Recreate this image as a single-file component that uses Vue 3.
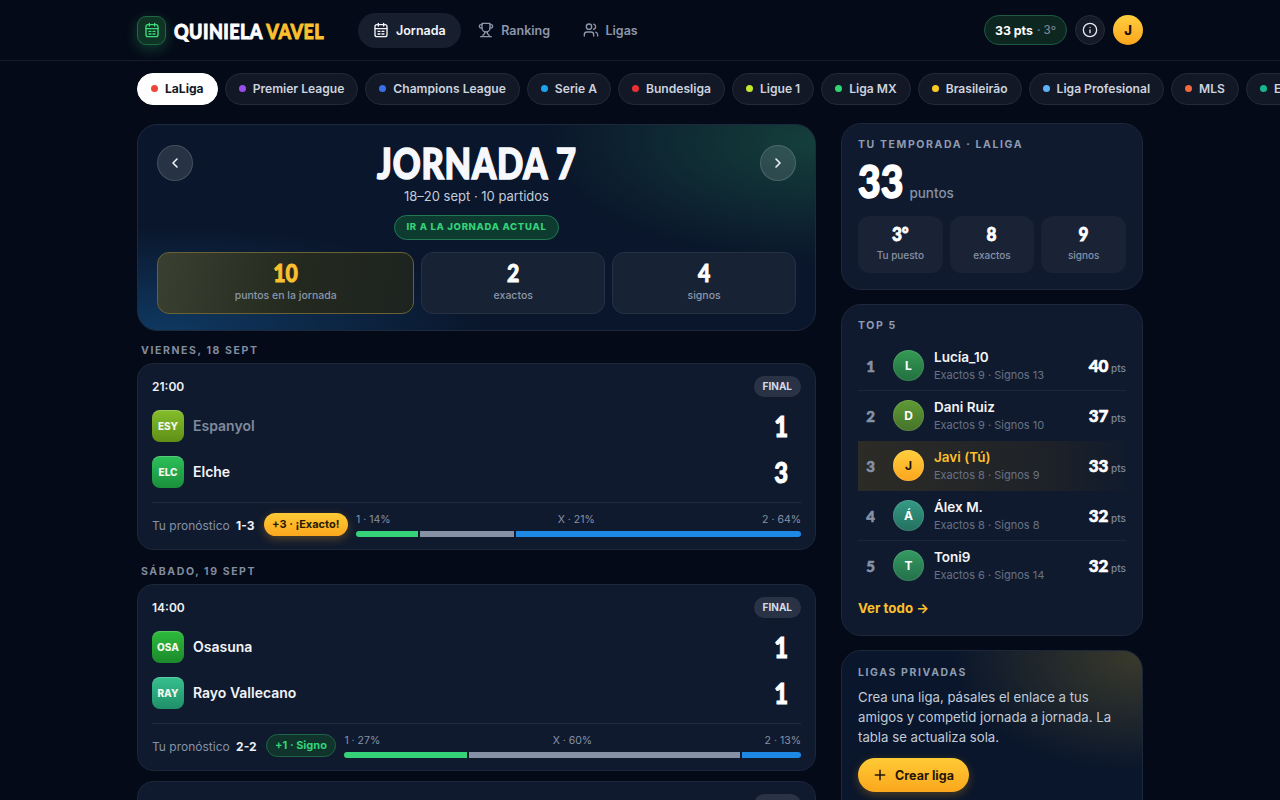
<template>
  <div class="page">
    <!-- cabecera -->
    <header class="topbar">
      <div class="topbar-in">
        <div class="logo">
          <span class="logo-icon">
            <svg width="16" height="16" viewBox="0 0 24 24" fill="none" stroke="#3ddc7c" stroke-width="2" stroke-linecap="round" stroke-linejoin="round">
              <rect x="3" y="4" width="18" height="18" rx="3" />
              <path d="M8 2v4M16 2v4M3 10h18M7.5 14h3M13.5 14h3M7.5 18h3M13.5 18h3" />
            </svg>
          </span>
          <span class="logo-text">QUINIELA <em>VAVEL</em></span>
        </div>
        <nav class="nav">
          <a class="nav-item active">
            <svg width="16" height="16" viewBox="0 0 24 24" fill="none" stroke="currentColor" stroke-width="2" stroke-linecap="round" stroke-linejoin="round">
              <rect x="3" y="4" width="18" height="18" rx="3" />
              <path d="M8 2v4M16 2v4M3 10h18M7.5 14h3M13.5 14h3M7.5 18h3M13.5 18h3" />
            </svg>
            Jornada
          </a>
          <a class="nav-item">
            <svg width="16" height="16" viewBox="0 0 24 24" fill="none" stroke="currentColor" stroke-width="2" stroke-linecap="round" stroke-linejoin="round">
              <path d="M6 9H4.5a2.5 2.5 0 0 1 0-5H6M18 9h1.5a2.5 2.5 0 0 0 0-5H18M4 22h16M10 14.66V17c0 .55-.47.98-.97 1.21C7.85 18.75 7 20.24 7 22M14 14.66V17c0 .55.47.98.97 1.21C16.15 18.75 17 20.24 17 22" />
              <path d="M18 2H6v7a6 6 0 0 0 12 0V2Z" />
            </svg>
            Ranking
          </a>
          <a class="nav-item">
            <svg width="16" height="16" viewBox="0 0 24 24" fill="none" stroke="currentColor" stroke-width="2" stroke-linecap="round" stroke-linejoin="round">
              <path d="M16 21v-2a4 4 0 0 0-4-4H6a4 4 0 0 0-4 4v2" />
              <circle cx="9" cy="7" r="4" />
              <path d="M22 21v-2a4 4 0 0 0-3-3.87M16 3.13a4 4 0 0 1 0 7.75" />
            </svg>
            Ligas
          </a>
        </nav>
        <div class="top-right">
          <div class="pts-pill">33 pts <span>· 3º</span></div>
          <button class="info-btn">
            <svg width="16" height="16" viewBox="0 0 24 24" fill="none" stroke="currentColor" stroke-width="2" stroke-linecap="round">
              <circle cx="12" cy="12" r="10" />
              <path d="M12 16v-4M12 8h.01" />
            </svg>
          </button>
          <div class="me">J</div>
        </div>
      </div>
    </header>

    <!-- competiciones -->
    <div class="chips">
      <button v-for="c in leagues" :key="c.name" class="chip" :class="{ on: c.on }">
        <i :style="{ background: c.color }"></i>{{ c.name }}
      </button>
    </div>

    <div class="layout">
      <main class="col-main">
        <section class="hero">
          <div class="hero-top">
            <button class="arrow">
              <svg width="16" height="16" viewBox="0 0 24 24" fill="none" stroke="currentColor" stroke-width="2.4" stroke-linecap="round" stroke-linejoin="round"><path d="m15 18-6-6 6-6" /></svg>
            </button>
            <div class="hero-title">
              <h1>JORNADA 7</h1>
              <p>18–20 sept · 10 partidos</p>
              <span class="go-now">IR A LA JORNADA ACTUAL</span>
            </div>
            <button class="arrow">
              <svg width="16" height="16" viewBox="0 0 24 24" fill="none" stroke="currentColor" stroke-width="2.4" stroke-linecap="round" stroke-linejoin="round"><path d="m9 18 6-6-6-6" /></svg>
            </button>
          </div>
          <div class="hero-stats">
            <div class="hstat gold"><b>10</b><span>puntos en la jornada</span></div>
            <div class="hstat"><b>2</b><span>exactos</span></div>
            <div class="hstat"><b>4</b><span>signos</span></div>
          </div>
        </section>

        <template v-for="day in days" :key="day.label">
          <h3 class="day">{{ day.label }}</h3>
          <article v-for="m in day.matches" :key="m.time + m.home.code" class="match">
            <div class="match-head">
              <span class="time">{{ m.time }}</span>
              <span class="final">FINAL</span>
            </div>
            <div class="team" :class="{ lost: m.home.lost }">
              <span class="crest" :style="{ background: m.home.bg }">{{ m.home.code }}</span>
              <span class="tname">{{ m.home.name }}</span>
              <span class="score">{{ m.home.goals }}</span>
            </div>
            <div class="team">
              <span class="crest" :style="{ background: m.away.bg }">{{ m.away.code }}</span>
              <span class="tname">{{ m.away.name }}</span>
              <span class="score">{{ m.away.goals }}</span>
            </div>
            <div class="match-foot">
              <span class="pred">Tu pronóstico <b>{{ m.pred }}</b></span>
              <span class="award" :class="m.kind">{{ m.award }}</span>
              <div class="odds">
                <div class="odds-labels">
                  <span>1 · {{ m.odds[0] }}%</span>
                  <span>X · {{ m.odds[1] }}%</span>
                  <span>2 · {{ m.odds[2] }}%</span>
                </div>
                <div class="bar">
                  <i class="g" :style="{ flexGrow: m.odds[0] }"></i>
                  <i class="s" :style="{ flexGrow: m.odds[1] }"></i>
                  <i class="b" :style="{ flexGrow: m.odds[2] }"></i>
                </div>
              </div>
            </div>
          </article>
        </template>
      </main>

      <aside class="col-side">
        <section class="card season">
          <h4>TU TEMPORADA · LALIGA</h4>
          <div class="big"><b>33</b><span>puntos</span></div>
          <div class="season-stats">
            <div><b>3º</b><span>Tu puesto</span></div>
            <div><b>8</b><span>exactos</span></div>
            <div><b>9</b><span>signos</span></div>
          </div>
        </section>

        <section class="card top">
          <h4>TOP 5</h4>
          <div v-for="r in ranking" :key="r.pos" class="rank" :class="{ mine: r.mine }">
            <span class="pos">{{ r.pos }}</span>
            <span class="ava" :style="{ background: r.bg }">{{ r.initial }}</span>
            <div class="who">
              <strong>{{ r.name }}</strong>
              <small>Exactos {{ r.ex }} · Signos {{ r.si }}</small>
            </div>
            <div class="rpts"><b>{{ r.pts }}</b> pts</div>
          </div>
          <a class="more">Ver todo →</a>
        </section>

        <section class="card priv">
          <h4>LIGAS PRIVADAS</h4>
          <p>Crea una liga, pásales el enlace a tus amigos y competid jornada a jornada. La tabla se actualiza sola.</p>
          <button class="create">
            <svg width="14" height="14" viewBox="0 0 24 24" fill="none" stroke="currentColor" stroke-width="2.6" stroke-linecap="round"><path d="M12 4v16M4 12h16" /></svg>
            Crear liga
          </button>
        </section>
      </aside>
    </div>
  </div>
</template>

<script setup>
const leagues = [
  { name: 'LaLiga', color: '#f04438', on: true },
  { name: 'Premier League', color: '#9b4dea' },
  { name: 'Champions League', color: '#3b6fe8' },
  { name: 'Serie A', color: '#1ba3f0' },
  { name: 'Bundesliga', color: '#ea2f36' },
  { name: 'Ligue 1', color: '#c4e82e' },
  { name: 'Liga MX', color: '#2fd672' },
  { name: 'Brasileirão', color: '#fbcb25' },
  { name: 'Liga Profesional', color: '#5cb2f6' },
  { name: 'MLS', color: '#f2693f' },
  { name: 'Eredivisie', color: '#14b88a' },
]

const days = [
  {
    label: 'VIERNES, 18 SEPT',
    matches: [
      {
        time: '21:00',
        home: { code: 'ESY', name: 'Espanyol', goals: 1, lost: true, bg: 'linear-gradient(180deg,#84bd2c,#5f8f16)' },
        away: { code: 'ELC', name: 'Elche', goals: 3, bg: 'linear-gradient(180deg,#2cc05a,#1a8f3c)' },
        pred: '1-3',
        award: '+3 · ¡Exacto!',
        kind: 'exact',
        odds: [14, 21, 64],
      },
    ],
  },
  {
    label: 'SÁBADO, 19 SEPT',
    matches: [
      {
        time: '14:00',
        home: { code: 'OSA', name: 'Osasuna', goals: 1, bg: 'linear-gradient(180deg,#2dbb3c,#1b8a2b)' },
        away: { code: 'RAY', name: 'Rayo Vallecano', goals: 1, bg: 'linear-gradient(180deg,#37c08f,#1f8f68)' },
        pred: '2-2',
        award: '+1 · Signo',
        kind: 'sign',
        odds: [27, 60, 13],
      },
      {
        time: '16:15',
        home: { code: 'VIL', name: 'Villarreal', goals: 2, bg: 'linear-gradient(180deg,#e8c52c,#b8951a)' },
        away: { code: 'GET', name: 'Getafe', goals: 0, bg: 'linear-gradient(180deg,#3a6fd8,#2450a8)' },
        pred: '1-0',
        award: '+1 · Signo',
        kind: 'sign',
        odds: [52, 28, 20],
      },
    ],
  },
]

const ranking = [
  { pos: 1, initial: 'L', name: 'Lucía_10', ex: 9, si: 13, pts: 40, bg: 'linear-gradient(180deg,#359a55,#22703f)' },
  { pos: 2, initial: 'D', name: 'Dani Ruiz', ex: 9, si: 10, pts: 37, bg: 'linear-gradient(180deg,#5f9a35,#45742a)' },
  { pos: 3, initial: 'J', name: 'Javi (Tú)', ex: 8, si: 9, pts: 33, mine: true, bg: 'linear-gradient(180deg,#ffcf3d,#fca51e)' },
  { pos: 4, initial: 'Á', name: 'Álex M.', ex: 8, si: 8, pts: 32, bg: 'linear-gradient(180deg,#359a85,#24705f)' },
  { pos: 5, initial: 'T', name: 'Toni9', ex: 6, si: 14, pts: 32, bg: 'linear-gradient(180deg,#359a62,#24704a)' },
]
</script>

<style>
html,
body {
  background: #050a18;
  overflow: hidden;
}
</style>

<style scoped>
* {
  box-sizing: border-box;
}
.page {
  height: 800px;
  overflow: hidden;
  background: #050a18;
  color: #fff;
  font-family: Inter, 'Noto Sans', sans-serif;
}
button {
  font-family: inherit;
  cursor: pointer;
}

/* cabecera */
.topbar {
  height: 61px;
  border-bottom: 1px solid #161d2c;
}
.topbar-in {
  width: 1006px;
  height: 60px;
  margin-left: 137px;
  display: flex;
  align-items: center;
}
.logo {
  display: flex;
  align-items: center;
  gap: 8px;
  width: 221px;
}
.logo-icon {
  width: 29px;
  height: 29px;
  flex: none;
  border-radius: 9px;
  display: flex;
  align-items: center;
  justify-content: center;
  background: #0f3324;
  border: 1px solid #1d6a41;
  box-shadow: 0 4px 14px rgba(45, 200, 110, 0.28);
}
.logo-text {
  font-family: Lato, sans-serif;
  font-weight: 900;
  font-size: 21px;
  letter-spacing: 0.5px;
  -webkit-text-stroke: 0.9px currentColor;
  white-space: nowrap;
  transform: scaleX(0.86);
  transform-origin: left center;
}
.logo-text em {
  font-style: normal;
  color: #fbc02d;
}
.nav {
  display: flex;
  align-items: center;
  gap: 2.5px;
}
.nav-item {
  height: 35px;
  display: flex;
  align-items: center;
  gap: 7px;
  padding: 0 15px;
  border-radius: 18px;
  font-size: 12.5px;
  font-weight: 600;
  color: #8b97ab;
}
.nav-item.active {
  color: #f3f5f9;
  background: #171e2e;
}
.top-right {
  margin-left: auto;
  display: flex;
  align-items: center;
  gap: 8px;
}
.pts-pill {
  height: 30px;
  padding: 0 10px;
  display: flex;
  align-items: center;
  gap: 4px;
  border-radius: 15px;
  background: #0d2620;
  border: 1px solid #1c5a42;
  font-size: 12.3px;
  font-weight: 700;
}
.pts-pill span {
  font-weight: 500;
  font-size: 11.5px;
  color: #77869a;
}
.info-btn {
  width: 30px;
  height: 30px;
  padding: 0;
  border-radius: 50%;
  display: flex;
  align-items: center;
  justify-content: center;
  color: #e6eaf0;
  background: #141a28;
  border: 1px solid #252c3b;
}
.me {
  width: 30px;
  height: 30px;
  border-radius: 50%;
  display: flex;
  align-items: center;
  justify-content: center;
  background: linear-gradient(180deg, #ffcf3d, #fca51e);
  color: #1a1204;
  font-size: 13px;
  font-weight: 800;
}

/* chips */
.chips {
  display: flex;
  gap: 7px;
  padding: 12px 0 0 137px;
  white-space: nowrap;
}
.chip {
  flex: none;
  height: 32px;
  padding: 0 13px 1px;
  display: flex;
  align-items: center;
  gap: 7px;
  border-radius: 16px;
  background: #121826;
  border: 1px solid #222a3a;
  color: #ccd3df;
  font-size: 12.1px;
  font-weight: 600;
}
.chip i {
  width: 7px;
  height: 7px;
  border-radius: 50%;
}
.chip.on {
  background: #fff;
  border-color: #fff;
  color: #121826;
  font-weight: 700;
}

.layout {
  width: 1006px;
  margin: 18px 0 0 137px;
  display: grid;
  grid-template-columns: 679px 302px;
  gap: 25px;
  align-items: start;
}

/* hero */
.hero {
  margin-top: 1px;
  height: 207px;
  padding: 20px 19px 0;
  border-radius: 20px;
  border: 1px solid #1d2a3e;
  background:
    radial-gradient(340px 150px at 100% 8%, rgba(34, 120, 82, 0.42), transparent 80%),
    radial-gradient(400px 130px at 4% 100%, rgba(20, 90, 150, 0.5), transparent 80%),
    #0a162b;
}
.hero-top {
  display: flex;
  justify-content: space-between;
  align-items: flex-start;
}
.arrow {
  width: 36px;
  height: 36px;
  padding: 0;
  border-radius: 50%;
  display: flex;
  align-items: center;
  justify-content: center;
  color: #f0f3f7;
  background: rgba(255, 255, 255, 0.12);
  border: 1px solid rgba(255, 255, 255, 0.14);
}
.hero-title {
  text-align: center;
}
.hero-title h1 {
  margin: 0;
  font-family: Lato, sans-serif;
  font-weight: 900;
  font-size: 42px;
  line-height: 36px;
  letter-spacing: 1px;
  color: #f7f8fb;
  -webkit-text-stroke: 1.6px currentColor;
  transform: scaleX(0.82);
}
.hero-title p {
  margin: 6px 0 0;
  font-size: 13px;
  line-height: 18px;
  color: #c2cbd8;
}
.go-now {
  display: inline-block;
  margin-top: 10px;
  height: 25px;
  line-height: 22px;
  padding: 0 11px;
  border-radius: 13px;
  border: 1px solid #1f7a52;
  background: #0e3b30;
  color: #35d27a;
  font-size: 9.5px;
  font-weight: 800;
  letter-spacing: 0.7px;
}
.hero-stats {
  margin-top: 12px;
  display: grid;
  grid-template-columns: 1.4fr 1fr 1fr;
  gap: 7px;
}
.hstat {
  height: 62px;
  border-radius: 12px;
  border: 1px solid #253044;
  background: #172234;
  display: flex;
  flex-direction: column;
  align-items: center;
  padding-top: 6px;
}
.hstat b {
  font-family: Lato, sans-serif;
  font-weight: 900;
  font-size: 25px;
  line-height: 26px;
  -webkit-text-stroke: 0.9px currentColor;
  transform: scaleX(0.85);
}
.hstat span {
  margin-top: 4px;
  font-size: 10.5px;
  font-weight: 500;
  color: #8a96a9;
}
.hstat.gold {
  border-color: #6b6234;
  background: linear-gradient(100deg, #3a4031, #24291f 55%, #1d2420);
}
.hstat.gold b {
  color: #fbc02d;
}

/* partidos */
.day {
  margin: 13px 0 5px 4px;
  font-size: 10.5px;
  line-height: 14px;
  font-weight: 700;
  letter-spacing: 1.6px;
  color: #808c9f;
}
.match {
  height: 187px;
  padding: 12px 14px 0 14px;
  margin-bottom: 10px;
  border-radius: 16px;
  border: 1px solid #1c2739;
  background: #101a2e;
}
.day + .match ~ .day {
  margin-top: 15px;
}
.match:has(+ .day) {
  margin-bottom: 0;
}
.match-head {
  display: flex;
  justify-content: space-between;
  align-items: center;
  height: 21px;
}
.time {
  font-size: 12px;
  font-weight: 600;
  color: #eef1f5;
}
.final {
  height: 21px;
  line-height: 21px;
  padding: 0 9px;
  border-radius: 11px;
  background: #2a3345;
  color: #d5dbe5;
  font-size: 10px;
  font-weight: 700;
}
.team {
  display: flex;
  align-items: center;
  gap: 9px;
  height: 32px;
  margin-top: 14px;
}
.match-head + .team {
  margin-top: 13px;
}
.crest {
  width: 32px;
  height: 32px;
  flex: none;
  border-radius: 8px;
  display: flex;
  align-items: center;
  justify-content: center;
  font-size: 10px;
  font-weight: 800;
  color: #f3f7ef;
  box-shadow: inset 0 1px 0 rgba(255, 255, 255, 0.2);
}
.tname {
  padding-bottom: 2px;
  font-size: 14px;
  font-weight: 600;
  color: #f2f4f8;
}
.lost .tname {
  color: #7e8a9d;
}
.score {
  margin-left: auto;
  margin-right: 12px;
  font-family: Lato, sans-serif;
  font-weight: 900;
  font-size: 28px;
  -webkit-text-stroke: 1px currentColor;
  transform: scaleX(0.85);
}
.match-foot {
  margin-top: 14px;
  padding-top: 9px;
  border-top: 1px solid #202b3d;
  display: flex;
  align-items: center;
}
.pred {
  padding-top: 1px;
  font-size: 12px;
  color: #8592a6;
  white-space: nowrap;
}
.pred b {
  margin-left: 3px;
  color: #eef1f5;
  font-weight: 700;
}
.award {
  flex: none;
  margin: 0 8px 0 9px;
  height: 23px;
  line-height: 23px;
  padding: 0 8.5px;
  border-radius: 12px;
  font-size: 11px;
  font-weight: 700;
  white-space: nowrap;
}
.award.exact {
  color: #2a1a02;
  background: linear-gradient(180deg, #ffca36, #fba71d);
  box-shadow: 0 3px 10px rgba(251, 170, 30, 0.28);
}
.award.sign {
  color: #35d27a;
  background: #10342c;
  border: 1px solid #1e6448;
  line-height: 21px;
}
.odds {
  flex: 1;
  min-width: 0;
}
.odds-labels {
  display: flex;
  justify-content: space-between;
  padding-top: 1px;
  font-size: 10.5px;
  line-height: 14px;
  color: #8592a6;
}
.bar {
  display: flex;
  gap: 2px;
  height: 6px;
  margin-top: 4px;
  border-radius: 3px;
  overflow: hidden;
}
.bar i {
  display: block;
  flex-basis: 0;
}
.bar .g {
  background: #35d27a;
}
.bar .s {
  background: #8791a5;
}
.bar .b {
  background: #1e88e5;
}

/* lateral */
.col-side {
  display: flex;
  flex-direction: column;
  gap: 14px;
}
.card {
  padding: 14px 16px;
  border-radius: 20px;
  border: 1px solid #1c2739;
  background: #101a2e;
}
.card h4 {
  margin: 0;
  font-size: 10.5px;
  line-height: 14px;
  font-weight: 700;
  letter-spacing: 1.6px;
  color: #8e9bb0;
}
.season {
  height: 167px;
}
.big {
  display: flex;
  align-items: baseline;
  gap: 6px;
  margin-top: 4px;
}
.big b {
  font-family: Lato, sans-serif;
  font-weight: 900;
  font-size: 46px;
  line-height: 50px;
  margin-right: -8px;
  -webkit-text-stroke: 1.6px currentColor;
  transform: scaleX(0.85);
  transform-origin: left center;
}
.big span {
  font-size: 13.5px;
  font-weight: 500;
  color: #8592a6;
}
.season-stats {
  margin-top: 10px;
  display: grid;
  grid-template-columns: repeat(3, 1fr);
  gap: 7px;
}
.season-stats div {
  height: 57px;
  border-radius: 12px;
  background: #1a2336;
  display: flex;
  flex-direction: column;
  align-items: center;
  padding-top: 7px;
}
.season-stats b {
  font-family: Lato, sans-serif;
  font-weight: 900;
  font-size: 19px;
  line-height: 22px;
  -webkit-text-stroke: 0.8px currentColor;
  transform: scaleX(0.9);
}
.season-stats span {
  margin-top: 4px;
  font-size: 10px;
  font-weight: 500;
  color: #8592a6;
}
.top {
  height: 332px;
}
.top h4 {
  margin-bottom: 8px;
}
.rank {
  height: 50px;
  display: flex;
  align-items: center;
  border-bottom: 1px solid #1b2638;
}
.rank:has(+ .more),
.rank:has(+ .mine),
.rank.mine {
  border-bottom-color: transparent;
}
.rank.mine {
  background: linear-gradient(90deg, #2c2b26, #1e2228 70%, #111b2d);
}
.pos {
  width: 25px;
  text-align: center;
  font-family: Lato, sans-serif;
  font-weight: 900;
  font-size: 15px;
  color: #8591a6;
  -webkit-text-stroke: 0.6px currentColor;
}
.ava {
  width: 31px;
  height: 31px;
  margin-left: 10px;
  flex: none;
  border-radius: 50%;
  display: flex;
  align-items: center;
  justify-content: center;
  font-size: 12px;
  font-weight: 700;
  box-shadow: inset 0 0 0 1px rgba(255, 255, 255, 0.1);
}
.mine .ava {
  color: #1a1204;
}
.who {
  margin-left: 10px;
  flex: 1;
  display: flex;
  flex-direction: column;
}
.who strong {
  font-size: 13.5px;
  line-height: 18px;
  font-weight: 600;
  color: #f2f4f8;
}
.mine .who strong {
  color: #fbc02d;
}
.who small {
  margin-top: 2px;
  font-size: 11px;
  line-height: 15px;
  color: #667286;
}
.rpts {
  font-size: 10px;
  font-weight: 500;
  color: #7b879b;
  white-space: nowrap;
}
.rpts b {
  font-family: Lato, sans-serif;
  font-weight: 900;
  font-size: 17px;
  color: #fff;
  -webkit-text-stroke: 0.6px currentColor;
}
.more {
  display: block;
  margin-top: 9px;
  font-size: 13.3px;
  font-weight: 700;
  color: #fbc02d;
}
.priv {
  height: 180px;
  background:
    radial-gradient(230px 140px at 98% 4%, rgba(140, 120, 45, 0.36), transparent 80%),
    #0a162b;
}
.priv h4 {
  margin-top: 1px;
}
.priv p {
  margin: 7px 0 0;
  font-size: 13.2px;
  line-height: 20px;
  color: #c2cbd8;
}
.create {
  margin-top: 11px;
  height: 34px;
  width: 111px;
  border: 0;
  border-radius: 17px;
  display: flex;
  align-items: center;
  justify-content: center;
  gap: 8px;
  font-size: 12.5px;
  font-weight: 700;
  color: #241703;
  background: linear-gradient(180deg, #ffca36, #fba71d);
  box-shadow: 0 3px 10px rgba(251, 170, 30, 0.28);
}
</style>
